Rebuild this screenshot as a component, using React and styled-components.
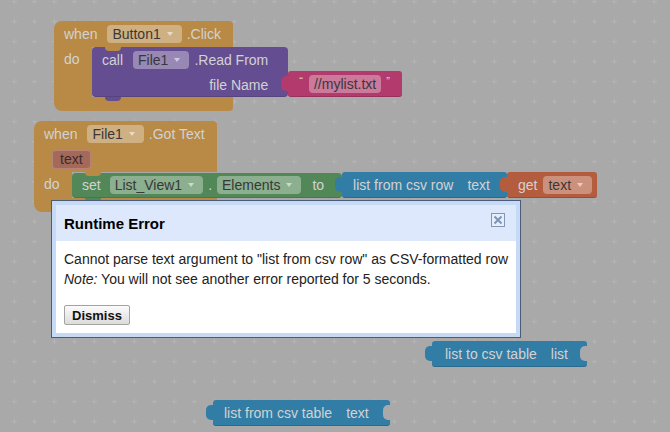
import React from "react";
import styled, { createGlobalStyle } from "styled-components";

const Global = createGlobalStyle`
  html, body { margin: 0; padding: 0; background: #a9a9a9; }
  body { overflow: hidden; }
`;

const C = {
  event: "#b88a46",
  proc: "#644e91",
  str: "#b23a6c",
  set: "#528858",
  list: "#327da5",
  get: "#b45c3e",
  ws: "#a9a9a9",
};

const Workspace = styled.div`
  position: relative;
  width: 670px;
  height: 432px;
  overflow: hidden;
  background: ${C.ws};
  font-family: "Liberation Sans", Arial, sans-serif;
  font-size: 14px;
`;

const GridSvg = styled.svg`
  position: absolute;
  left: 0;
  top: 0;
`;

const Placed = styled.div`
  position: absolute;
  left: ${(p) => p.$x}px;
  top: ${(p) => p.$y}px;
`;

const EventBlock = styled.div`
  display: inline-flex;
  flex-direction: column;
  align-items: flex-start;
`;

const EventHead = styled.div`
  position: relative;
  width: ${(p) => p.$w}px;
  background: ${(p) => p.$c};
  border-radius: 8px 4px 0 0;
  padding-left: 10px;
  box-sizing: border-box;
  &::after {
    content: "";
    position: absolute;
    left: 51px;
    bottom: -4px;
    width: 16px;
    height: 4px;
    background: ${(p) => p.$c};
    border-radius: 0 0 4px 4px;
    z-index: 2;
  }
`;

const Row = styled.div`
  display: flex;
  align-items: center;
  height: ${(p) => p.$h || 26}px;
  gap: 5px;
  padding-left: ${(p) => p.$pl || 0}px;
  justify-content: ${(p) => (p.$end ? "flex-end" : "flex-start")};
`;

const Mouth = styled.div`
  display: flex;
  align-items: stretch;
`;

const Spine = styled.div`
  width: 38px;
  background: ${(p) => p.$c};
  padding-left: 10px;
  box-sizing: border-box;
  line-height: 25px;
  color: #d2d2d2;
`;

const Chain = styled.div`
  display: flex;
  align-items: ${(p) => (p.$bottom ? "flex-end" : "center")};
`;

const Footer = styled.div`
  width: ${(p) => p.$w}px;
  height: 14px;
  background: ${(p) => p.$c};
  border-radius: 0 0 4px 8px;
`;

const Txt = styled.span`
  color: #d2d2d2;
  white-space: nowrap;
  margin-left: ${(p) => p.$ml || 0}px;
`;

const Field = styled.span`
  display: inline-flex;
  align-items: center;
  height: 18px;
  padding: 0 ${(p) => (p.$arrow ? 9 : 5)}px 0 5px;
  margin-left: ${(p) => (p.$ml === undefined ? 5 : p.$ml)}px;
  border-radius: 4px;
  background: rgba(255, 255, 255, 0.33);
  color: #383838;
  white-space: nowrap;
  ${(p) =>
    p.$arrow &&
    `&::after {
      content: "";
      margin-left: 6px;
      border-left: 3.5px solid transparent;
      border-right: 3.5px solid transparent;
      border-top: 4px solid rgba(255,255,255,0.55);
    }`}
`;

const Chip = styled.span`
  display: inline-flex;
  align-items: center;
  height: 17px;
  padding: 0 7px;
  border-radius: 4px;
  background: #a5695a;
  border: 1px solid rgba(255, 255, 255, 0.18);
  color: #3a2d2a;
`;

const Stmt = styled.div`
  position: relative;
  background: ${(p) => p.$c};
  border-radius: 4px;
  padding: 0 ${(p) => p.$pr}px 0 10px;
  display: flex;
  flex-direction: column;
  box-shadow: inset 0 -1px 0 rgba(0, 0, 0, 0.12);
  &::after {
    content: "";
    position: absolute;
    left: 13px;
    bottom: -4px;
    width: 16px;
    height: 4px;
    background: ${(p) => p.$c};
    border-radius: 0 0 4px 4px;
    z-index: 2;
  }
`;

const Value = styled.div`
  position: relative;
  display: flex;
  align-items: center;
  height: 26px;
  gap: 5px;
  padding: 0 ${(p) => p.$pr}px 0 ${(p) => p.$pl}px;
  background: ${(p) => p.$c};
  border-radius: 3px;
  box-shadow: inset 0 -1px 0 rgba(0, 0, 0, 0.15);
  &::before {
    content: "";
    position: absolute;
    left: -7px;
    top: 5px;
    width: 8px;
    height: 15px;
    background: ${(p) => p.$c};
    border-radius: 5px 0 0 5px;
  }
  ${(p) =>
    p.$socket &&
    `&::after {
      content: "";
      position: absolute;
      right: 0;
      top: 5px;
      width: 7px;
      height: 15px;
      background: ${C.ws};
      border-radius: 5px 0 0 5px;
    }`}
`;

const Quote = styled.span`
  color: #d8d8d8;
  font-size: 11px;
  align-self: flex-start;
  margin-top: 4px;
`;

/* Dialog */
const Dialog = styled.div`
  position: absolute;
  left: 51px;
  top: 200px;
  width: 470px;
  box-sizing: border-box;
  border: 1px solid #4a5c77;
  background: #c6daf6;
  padding: 4px;
  z-index: 10;
`;

const DialogHead = styled.div`
  height: 36px;
  background: #dde8fc;
  display: flex;
  justify-content: space-between;
  padding: 0 11px 0 8px;
`;

const Title = styled.div`
  align-self: center;
  font-family: "Liberation Sans", Arial, sans-serif;
  font-weight: bold;
  font-size: 15px;
  color: #000;
`;

const CloseBox = styled.div`
  margin-top: 8px;
  width: 14px;
  height: 14px;
  box-sizing: border-box;
  border: 1px solid #8196b9;
  background: #e6eefc;
  display: flex;
  align-items: center;
  justify-content: center;
`;

const DialogBody = styled.div`
  background: #fff;
  padding: 8px;
  font-family: "Liberation Sans", Arial, sans-serif;
  font-size: 14px;
  line-height: 20px;
  color: #222;
  white-space: nowrap;
`;

const Buttons = styled.div`
  margin-top: 16px;
  display: flex;
`;

const DismissButton = styled.button`
  width: 66px;
  height: 20px;
  padding: 0;
  font-family: "Liberation Sans", Arial, sans-serif;
  font-weight: bold;
  font-size: 13px;
  color: #111;
  border: 1px solid #a3a3a3;
  border-radius: 2px;
  background: linear-gradient(#fbfbfb, #dcdcdc);
`;

const Grid = () => (
  <GridSvg width="670" height="432">
    <defs>
      <pattern id="grid" width="20" height="20" patternUnits="userSpaceOnUse" x="4" y="-9">
        <rect x="8" y="10" width="5" height="1" fill="#b4b4b4" />
        <rect x="10" y="8" width="1" height="5" fill="#b4b4b4" />
      </pattern>
    </defs>
    <rect width="670" height="432" fill="url(#grid)" />
  </GridSvg>
);

export default function App() {
  return (
    <Workspace>
      <Global />
      <Grid />

      <Placed $x={54} $y={21}>
        <EventBlock>
          <EventHead $c={C.event} $w={179}>
            <Row $h={26}>
              <Txt>when</Txt>
              <Field $arrow>Button1</Field>
              <Txt>.Click</Txt>
            </Row>
          </EventHead>
          <Mouth>
            <Spine $c={C.event}>do</Spine>
            <Chain $bottom>
              <Stmt $c={C.proc} $pr={20}>
                <Row $h={25}>
                  <Txt>call</Txt>
                  <Field $arrow>File1</Field>
                  <Txt>.Read From</Txt>
                </Row>
                <Row $h={25} $end>
                  <Txt>file Name</Txt>
                </Row>
              </Stmt>
              <Value $c={C.str} $pl={11} $pr={12}>
                <Quote>“</Quote>
                <Field $ml={1}>//mylist.txt</Field>
                <Quote>”</Quote>
              </Value>
            </Chain>
          </Mouth>
          <Footer $c={C.event} $w={179} />
        </EventBlock>
      </Placed>

      <Placed $x={34} $y={121}>
        <EventBlock>
          <EventHead $c={C.event} $w={183}>
            <Row $h={25}>
              <Txt>when</Txt>
              <Field $arrow>File1</Field>
              <Txt>.Got Text</Txt>
            </Row>
            <Row $h={26} $pl={8}>
              <Chip>text</Chip>
            </Row>
          </EventHead>
          <Mouth>
            <Spine $c={C.event}>do</Spine>
            <Chain>
              <Stmt $c={C.set} $pr={18}>
                <Row $h={25}>
                  <Txt>set</Txt>
                  <Field $arrow $ml={4}>List_View1</Field>
                  <Txt>.</Txt>
                  <Field $arrow $ml={0}>Elements</Field>
                  <Txt $ml={6}>to</Txt>
                </Row>
              </Stmt>
              <Value $c={C.list} $pl={11} $pr={17}>
                <Txt>list from csv row</Txt>
                <Txt $ml={9}>text</Txt>
              </Value>
              <Value $c={C.get} $pl={11} $pr={5}>
                <Txt>get</Txt>
                <Field $arrow $ml={1}>text</Field>
              </Value>
            </Chain>
          </Mouth>
          <Footer $c={C.event} $w={183} />
        </EventBlock>
      </Placed>

      <Placed $x={432} $y={341}>
        <Value $c={C.list} $pl={13} $pr={19} $socket>
          <Txt>list to csv table</Txt>
          <Txt $ml={9}>list</Txt>
        </Value>
      </Placed>

      <Placed $x={213} $y={400}>
        <Value $c={C.list} $pl={11} $pr={21} $socket>
          <Txt>list from csv table</Txt>
          <Txt $ml={9}>text</Txt>
        </Value>
      </Placed>

      <Dialog>
        <DialogHead>
          <Title>Runtime Error</Title>
          <CloseBox>
            <svg width="10" height="10" viewBox="0 0 10 10">
              <path d="M1.5 1.5 L8.5 8.5 M8.5 1.5 L1.5 8.5" stroke="#7d93b8" strokeWidth="2" />
            </svg>
          </CloseBox>
        </DialogHead>
        <DialogBody>
          <div>Cannot parse text argument to "list from csv row" as CSV-formatted row</div>
          <div>
            <i>Note:</i> You will not see another error reported for 5 seconds.
          </div>
          <Buttons>
            <DismissButton>Dismiss</DismissButton>
          </Buttons>
        </DialogBody>
      </Dialog>
    </Workspace>
  );
}
